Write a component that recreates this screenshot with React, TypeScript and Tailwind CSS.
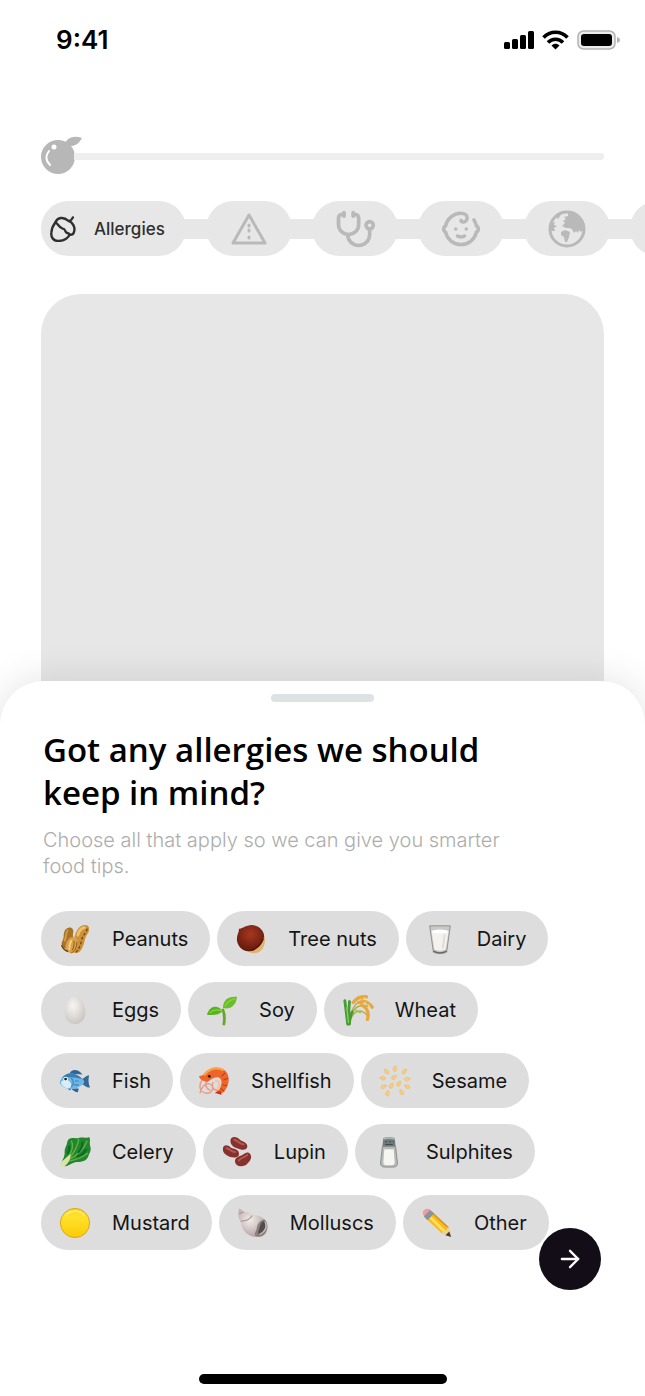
import { useState, type ReactNode } from "react";
import { ArrowRight, Baby } from "lucide-react";
import clsx from "clsx";

// ---------- Step icons ----------

function NutIcon() {
  return (
    <svg viewBox="0 0 76 76" className="size-[26px]" fill="none" stroke="currentColor" strokeWidth="7" strokeLinecap="round" strokeLinejoin="round" aria-hidden="true">
      <path d="M16 18C22 4 39 1 54 14C66 17 75 34 70 47C68 54 63 56 57 54C56 63 42 72 26 73C10 74 2 62 4 48C5 37 9 27 16 18Z" />
      <path d="M16 18C24 24 27 34 37 37C46 37 43 47 49 49C54 50 56 51 57 54" />
      <path d="M56 15C61 13 65 9 67 4" />
    </svg>
  );
}

function WarningIcon() {
  return (
    <svg viewBox="0 0 36 34" className="h-[34px] w-9" fill="none" stroke="currentColor" strokeWidth="3" strokeLinejoin="round" strokeLinecap="round" aria-hidden="true">
      <path d="M18 3 34 31H2Z" />
      <path d="M18 13v1M18 18v1M18 25v1" />
    </svg>
  );
}

function StethoscopeIcon() {
  return (
    <svg viewBox="0 0 24 24" className="size-11" fill="none" stroke="currentColor" strokeWidth="2" strokeLinecap="round" strokeLinejoin="round" aria-hidden="true">
      <path d="M6 4H5a2 2 0 0 0-2 2v3.500a5.500 5.500 0 0 0 11 0V6a2 2 0 0 0-2-2h-1" />
      <path d="M8 15a6 6 0 1 0 12 0v-3M11 3v2M6 3v2" />
      <circle cx="20" cy="10" r="2" />
    </svg>
  );
}

function GlobeIcon() {
  return (
    <svg viewBox="0 0 38 38" className="size-[38px]" aria-hidden="true">
      <circle cx="19" cy="19" r="17" fill="none" stroke="currentColor" strokeWidth="3" />
      <path fill="currentColor" d="M20 3c9 0 16 7 16 16l-3 3-2-2-1 3-2-2-2 2-2-4-3-1-3 0-4-2 3-3-2-2 3-2-2-2 4-1zM13 22l4-2 5 2-1 5-2 5-2 0-1-5-3-2zM3 13l4-1-1 3 3 1-3 2 1 3-4 0z" />
      <path d="M12 4c-1 2-1 3-3 4" stroke="currentColor" strokeWidth="2" fill="none" />
    </svg>
  );
}

const steps: { id: string; icon: ReactNode; label?: string }[] = [
  { id: "Allergies", icon: <NutIcon />, label: "Allergies" },
  { id: "Intolerances", icon: <WarningIcon /> },
  { id: "Health conditions", icon: <StethoscopeIcon /> },
  { id: "Life stage", icon: <Baby className="size-[42px]" strokeWidth={2} aria-hidden="true" /> },
  { id: "Region", icon: <GlobeIcon /> },
  { id: "More", icon: null },
];

// ---------- Allergen pictures, all on a 32x32 grid ----------

const peanuts = (
  <>
    <path d="M9 4c4-1 6 2 5 6-1 3 2 6 0 11-2 6-9 7-11 3-3-4 1-7 1-11S5 5 9 4z" fill="#a87327" />
    <path d="M8 7c-2 3-1 7-3 11" stroke="#cf9c4c" strokeWidth="2" fill="none" strokeLinecap="round" />
    <path d="M27 1c5 0 5 6 2 10-2 3-2 4-3 8-2 7-4 12-9 12-6 0-6-8-3-12 2-3 1-4 2-7 2-6 5-11 11-11z" fill="#cb9038" />
    <path d="M26 4c-4 1-6 4-7 8" stroke="#ecc06d" strokeWidth="3" fill="none" strokeLinecap="round" />
    <path d="M29 5c-1 5-5 7-6 12-1 6-3 10-6 13" stroke="#7a4813" strokeWidth="1.500" fill="none" strokeDasharray="3 2" />
    <path d="M13 14c5-1 7 3 6 8-1 6-3 9-7 9S6 28 6 24s3-9 7-10z" fill="#d9a24a" />
    <path d="M12 18c-2 3-2 6-2 9" stroke="#f3cf87" strokeWidth="2" fill="none" strokeLinecap="round" />
    <path d="M18 19c0 6-2 10-6 12M15 18c0 4 0 7-2 10" stroke="#8a561a" strokeWidth="1" fill="none" />
    <path d="M2 23c1 3 3 5 6 6" stroke="#6d3f10" strokeWidth="1.500" fill="none" strokeLinecap="round" />
  </>
);

const chestnut = (
  <>
    <path d="M29 11c4 6 1 16-5 19-5 2-10 1-13-2z" fill="#e0b26f" />
    <path d="M3 5c4 0 6-3 13-4 8 0 14 6 14 12-1 7-8 14-15 16C7 30 1 23 1 16 1 11 4 8 3 5z" fill="url(#nutSkin)" />
    <path d="M29 16c-3 7-8 11-13 12" stroke="#4e1109" strokeWidth="1.500" fill="none" />
  </>
);

const milk = (
  <>
    <path d="M5 2h22l-4 28c-3 2-11 2-14 0z" fill="#c9c9c7" stroke="#8f8f8d" />
    <path d="M7 8c5-2 13-2 18 0l-3 19c-3 2-9 2-12 0z" fill="#f3f2ee" />
    <ellipse cx="16" cy="8" rx="9" ry="2" fill="#fff" />
    <path d="M9 29c4 2 10 2 14 0" stroke="#666" strokeWidth="1.500" fill="none" />
    <path d="M21 11l-2 15" stroke="#dedbd4" strokeWidth="2" />
  </>
);

const egg = <path d="M16 1c6 0 11 10 11 18 0 7-5 12-11 12S5 26 5 19C5 11 10 1 16 1z" fill="url(#eggShell)" />;

const sprout = (
  <>
    <path d="M18 31c1-6 1-10-1-15" stroke="#69a62b" strokeWidth="3" fill="none" strokeLinecap="round" />
    <path d="M17 17C11 10 3 11 0 21c7 1 13 0 17-4z" fill="#55b51f" />
    <path d="M17 14C17 5 23 1 32 2c-1 9-7 14-15 12z" fill="#69bf2a" />
    <path d="M3 19c4-4 8-4 13-2M19 12c3-5 7-7 11-8" stroke="#8fd043" strokeWidth="1.300" fill="none" />
  </>
);

const wheat = (
  <>
    <path d="M5 31C8 19 11 7 26 2M6 30C8 16 15 9 27 12M7 29C10 18 18 12 27 23" stroke="#b8ad4b" strokeWidth="1.500" fill="none" />
    <path d="M11 8C15 3 20 1 25 2M17 8c6-2 11 0 14 5M20 11c6 2 8 9 6 15" stroke="#e7a73c" strokeWidth="3.500" strokeDasharray="4 1" fill="none" strokeLinecap="round" />
    <path d="M17 6c3-2 6-3 9-3M22 8c4 1 6 3 7 6" stroke="#f8cf73" strokeWidth="1.500" strokeDasharray="3 2" fill="none" />
    <path d="M2 6c1 8 2 16 3 25M7 7c-1 9-1 16-1 24M10 18c-2 4-3 8-3 13" stroke="#459c32" strokeWidth="3" fill="none" strokeLinecap="round" />
    <path d="M4 13c1 6 1 11 2 17M11 15l8 4" stroke="#8ac95a" strokeWidth="1.500" fill="none" />
  </>
);

const fish = (
  <>
    <path d="M10 8c3-5 9-5 14 1zM12 24c2 2 4 4 7 4l1-4zM7 22c1 2 2 3 4 4l1-4z" fill="#2e6598" />
    <path d="M22 15c4-2 6-5 9-5-1 4-1 9 1 13-4 0-7-3-10-5z" fill="#326995" />
    <path d="M0 16C5 7 16 5 25 15c1 1 1 3 0 4C17 27 5 26 0 19z" fill="#6fb5e5" />
    <path d="M2 13C7 6 16 6 24 14c-7-2-14-3-22-1z" fill="#3b7db2" />
    <path d="M1 18c0-4 10-5 11 2 0 3-2 4-4 4-3-1-6-3-7-6z" fill="#d7edf8" />
    <path d="M12 13c3 3 3 7 0 9M16 16h4M15 20h5" stroke="#3e83b5" strokeWidth="1.300" fill="none" />
    <circle cx="6" cy="14" r="2.500" fill="#fff" />
    <circle cx="6" cy="14" r="1.500" fill="#16232e" />
  </>
);

const shrimp = (
  <>
    <path d="M9 11C-2 16-1 28 8 29c8 0 8-9 3-10-5-1-8 3-10 10M10 14c-4 4-4 9 2 12M15 17c-2 5 0 9 5 9" stroke="#e79c87" strokeWidth="1.500" fill="none" />
    <path d="M4 10C9 2 21-1 28 5c7 7 3 21-5 25l-6-1c5-4 9-10 6-15-3-4-8-1-14 3-4-1-8-2-9-6z" fill="#ed6529" />
    <path d="M6 9C11 3 18 1 25 4" stroke="#ffa24d" strokeWidth="2.500" fill="none" strokeLinecap="round" />
    <path d="m24 11 4-4M26 15l5-2M25 20l5 1M23 24l4 3" stroke="#c43d19" strokeWidth="1.200" fill="none" />
    <path d="M17 16c5-1 6 4 3 9" stroke="#f5c4ad" strokeWidth="3" fill="none" />
    <path d="M17 28l7 3-1-4z" fill="#bf2f1a" />
    <circle cx="11" cy="11" r="1.500" fill="#31150f" />
  </>
);

const sesameSeeds = [
  [7, 6, -40], [16, 3, 10], [26, 6, 40], [3, 13, -80], [15, 12, 60], [29, 14, 85], [4, 22, 65],
  [12, 21, 30], [20, 19, 30], [29, 22, -65], [8, 29, 10], [23, 28, -30],
];

const sesame = sesameSeeds.map(([x, y, angle]) => (
  <path key={`${x}-${y}`} d="M0-3.500C2-1 3 2 0 3-3 2-2-1 0-3.500z" fill="#f8cc7b" stroke="#eab45c" strokeWidth=".5" transform={`translate(${x} ${y}) rotate(${angle})`} />
));

const leaf = (
  <>
    <path d="M10 2c3-2 6 0 10-1 4-1 7 1 11-1 2 3 0 5 1 9 2 6-1 8-2 12-3 6-8 5-14 6-4 1-8 5-12 4-4-1-2-5 0-9 2-5 0-7 2-11 2-3 1-7 4-9z" fill="#22862c" />
    <path d="M12 4c3 5 1 11-3 18M20 2c-1 9-5 15-12 23M29 4c-3 8-9 15-21 21M30 17c-6 5-13 7-21 9" stroke="#62b045" strokeWidth="1.500" fill="none" />
    <path d="M24 5c0 6-2 9-5 12M28 13c-3 5-7 7-10 8M10 9c0 4 0 6-2 9" stroke="#0d6824" strokeWidth="2" fill="none" />
    <path d="M11 18c1 5-3 12-8 14-3-1-3-3-1-6z" fill="#d8e3a5" />
  </>
);

const beans = (
  <>
    <path d="M9 4c0-5 7-5 10-1 3 2 8 3 8 7 0 5-7 4-11 2-4-1-7-4-7-8z" fill="#87322e" />
    <path d="M1 13c0-5 5-5 8-2 3 2 9 2 9 6 1 6-6 5-10 4-4-2-7-4-7-8z" fill="#87322e" />
    <path d="M14 27c-1-5 4-6 8-8 3-2 5-4 8-1 3 4-1 9-5 12-4 2-10 2-11-3z" fill="#87322e" />
    <path d="M13 3c4 1 5 4 10 5M5 12c4 1 5 4 9 4M18 25c2-3 6-3 9-6" stroke="#b35a54" strokeWidth="2" fill="none" strokeLinecap="round" />
  </>
);

const salt = (
  <>
    <path d="M9 10h14l2 18c0 3-2 4-5 4h-8c-3 0-5-1-5-4z" fill="#b8bab8" stroke="#858a88" />
    <path d="M11 13h10l1 14c0 2-1 3-3 3h-6c-2 0-3-1-3-3z" fill="#f5f5f2" />
    <path d="M10 1c4-1 8-1 12 0l1 9H9z" fill="#707a7a" />
    <path d="M10 2c4-1 8-1 12 0" stroke="#aab2b2" strokeWidth="2" />
    <path d="M12 5h2m2 0h2m2 0h1M12 8h8" stroke="#3d4747" />
  </>
);

const yellowDot = (
  <>
    <circle cx="16" cy="16" r="15.500" fill="url(#yellow)" stroke="#dda310" />
    <path d="M6 8C11 2 21 2 26 8" stroke="#ffed76" strokeWidth="1.500" fill="none" />
  </>
);

const shell = (
  <>
    <path d="M1 2c0-3 3 0 5 2 5 0 7 1 9 4 8-1 15 3 16 11 1 7-3 12-10 12C10 31 4 24 3 15 0 11 0 7 1 2z" fill="url(#shellBody)" />
    <path d="M1 6c3 0 4-1 5-2M3 14c6 0 10-2 12-6" stroke="#a69593" strokeWidth="1.200" fill="none" />
    <path d="M28 12c4 3 4 9 2 13-2 5-7 6-11 5-3-3 1-5 1-9 1-5 4-8 8-9z" fill="#8a8080" />
    <path d="M27 14c4 4 3 10-3 14-4 0-2-4-1-7s1-5 4-7z" fill="#544d4d" />
    <path d="M29 15c2 5 0 10-6 13" stroke="#c9bfbd" strokeWidth="1.500" fill="none" />
  </>
);

const pencil = (
  <>
    <path d="M10 4 28 20l3 10-10-3L4 11z" fill="#f5bb20" />
    <path d="m8 9 17 17" stroke="#ffdf57" strokeWidth="3" />
    <path d="m11 5 17 16" stroke="#d5911b" strokeWidth="1.500" />
    <path d="M2 8c-3-4 3-9 7-6l3 3-7 7z" fill="#ea929b" />
    <path d="m8 2 5 4-7 7-4-4z" fill="#89949a" />
    <path d="M1 6c-1-3 4-7 8-4L3 8z" fill="#ee9ba3" />
    <path d="m28 20 3 10-10-3 2-3 3 0 1-3z" fill="#efd09b" />
    <path d="m29 25 2 6-6-2z" fill="#3e3b38" />
  </>
);

const allergens: { name: string; picture: ReactNode }[] = [
  { name: "Peanuts", picture: peanuts },
  { name: "Tree nuts", picture: chestnut },
  { name: "Dairy", picture: milk },
  { name: "Eggs", picture: egg },
  { name: "Soy", picture: sprout },
  { name: "Wheat", picture: wheat },
  { name: "Fish", picture: fish },
  { name: "Shellfish", picture: shrimp },
  { name: "Sesame", picture: sesame },
  { name: "Celery", picture: leaf },
  { name: "Lupin", picture: beans },
  { name: "Sulphites", picture: salt },
  { name: "Mustard", picture: yellowDot },
  { name: "Molluscs", picture: shell },
  { name: "Other", picture: pencil },
];

// Gradients shared by the allergen pictures
function Gradients() {
  return (
    <svg className="absolute size-0" aria-hidden="true">
      <defs>
        <radialGradient id="nutSkin" cx=".5" cy=".35" r=".7">
          <stop stopColor="#a6381f" />
          <stop offset="1" stopColor="#5f160c" />
        </radialGradient>
        <radialGradient id="eggShell" cx=".4" cy=".35" r=".7">
          <stop stopColor="#f7f5f2" />
          <stop offset="1" stopColor="#c9c5c1" />
        </radialGradient>
        <radialGradient id="shellBody" cx=".4" cy=".4" r=".6">
          <stop stopColor="#f3ecea" />
          <stop offset="1" stopColor="#b5a5a3" />
        </radialGradient>
        <linearGradient id="yellow" x1="0" y1="0" x2="0" y2="1">
          <stop stopColor="#fdd426" />
          <stop offset=".3" stopColor="#ffe12b" />
          <stop offset="1" stopColor="#fbcb05" />
        </linearGradient>
      </defs>
    </svg>
  );
}

function StatusBar() {
  return (
    <div className="flex h-20 items-center justify-between pr-[25px] pl-14">
      <span className="text-[26px] leading-8 font-semibold text-black">9:41</span>
      <svg viewBox="0 0 116 20" className="h-5 w-[116px]" aria-hidden="true">
        <g fill="#000">
          <rect x="0" y="12" width="6" height="7" rx="1.500" />
          <rect x="8" y="9" width="6" height="10" rx="1.500" />
          <rect x="16" y="5" width="6" height="14" rx="1.500" />
          <rect x="24" y="1" width="6" height="18" rx="1.500" />
        </g>
        <g fill="none" stroke="#000" strokeWidth="3.500">
          <path d="M39.500 7.500C46 .5 57 .5 63.500 7.500" />
          <path d="M44 12.500C48 8 55 8 59 12.500" />
        </g>
        <path d="M51.500 19.500 47.500 15.500C50 13 53 13 55.500 15.500z" fill="#000" />
        <rect x="74" y="1" width="37" height="18" rx="5.500" fill="#ececec" stroke="#b3b3b3" strokeWidth="1.500" />
        <rect x="77" y="4" width="31" height="12" rx="3" fill="#000" />
        <path d="M113 7c4 1 4 5 0 6z" fill="#b3b3b3" />
      </svg>
    </div>
  );
}

function ProgressTrack() {
  return (
    <div role="progressbar" aria-label="Profile progress" aria-valuenow={0} className="flex h-[38px] items-center">
      <svg viewBox="0 0 41 38" className="h-[38px] w-[41px] shrink-0" aria-hidden="true">
        <circle cx="17" cy="21" r="17" fill="#b7b7b7" />
        <path d="M23 9C26 1 33-1 41 2 38 8 33 11 26 10z" fill="#b7b7b7" />
        <circle cx="13" cy="11" r="2.500" fill="#fff" />
        <path d="M8 15c-4 5-3 10 1 14" stroke="#fff" strokeWidth="2" fill="none" strokeLinecap="round" />
      </svg>
      <div className="-ml-2 mt-0.5 h-[7px] flex-1 rounded-r-full bg-[#eeeeee]" />
    </div>
  );
}

function Steps() {
  return (
    <nav aria-label="Steps" className="flex items-center overflow-hidden pl-[41px]">
      {steps.map((step, index) => (
        <div key={step.id} className="flex shrink-0 items-center">
          {index > 0 && <span className="-mx-1 h-5 w-7 bg-[#e7e7e7]" />}
          <button
            type="button"
            aria-label={step.id}
            aria-current={step.label ? "step" : undefined}
            className={clsx(
              "flex h-[55px] items-center rounded-full bg-[#e7e7e7]",
              step.label ? "w-[145px] gap-[18px] pl-[9px] text-[#2f2f2f]" : "w-[86px] justify-center text-[#b9b9b9]"
            )}
          >
            {step.icon}
            {step.label && <span className="text-[17px] leading-6 font-medium">{step.label}</span>}
          </button>
        </div>
      ))}
    </nav>
  );
}

function AllergenChip({ name, picture, selected, onToggle }: { name: string; picture: ReactNode; selected: boolean; onToggle: () => void }) {
  return (
    <button
      type="button"
      aria-pressed={selected}
      onClick={onToggle}
      className={clsx(
        "flex h-[55px] items-center gap-[21px] rounded-full pr-[22px] pl-[18px]",
        selected ? "bg-[#c4c4c4]" : "bg-[#dddddd]"
      )}
    >
      <svg viewBox="-1 -1 34 34" className="size-8 shrink-0" aria-hidden="true">
        {picture}
      </svg>
      <span className="text-xl leading-7 text-[#151515]">{name}</span>
    </button>
  );
}

export default function App() {
  const [selected, setSelected] = useState<string[]>([]);

  const toggle = (name: string) => {
    setSelected((prev) => (prev.includes(name) ? prev.filter((x) => x !== name) : [...prev, name]));
  };

  return (
    <main className="flex min-h-screen flex-col overflow-hidden bg-white font-['Inter',sans-serif]">
      <Gradients />
      <StatusBar />
      <div className="mt-14 px-[41px]">
        <ProgressTrack />
      </div>
      <div className="mt-[27px]">
        <Steps />
      </div>

      <div className="mx-[41px] mt-[38px] min-h-60 flex-1 rounded-t-[40px] bg-[#e7e7e7]" />

      {/* Bottom sheet */}
      <section className="relative -mt-11 rounded-t-[44px] bg-white px-[41px] pt-[13px] pb-3 shadow-[0_0_40px_rgba(0,0,0,0.12)]">
        <div className="mx-auto h-2 w-[103px] rounded-full bg-[#dfe2e5]" />
        <div className="mt-[26px] px-0.5">
          <h1 className="max-w-[500px] font-['Open_Sans',sans-serif] text-[33px] leading-[43px] font-semibold text-black">
            Got any allergies we should keep in mind?
          </h1>
          <p className="mt-[13px] max-w-[480px] text-xl leading-[26px] font-light text-[#adadad]">
            Choose all that apply so we can give you smarter food tips.
          </p>
        </div>

        <div className="mt-8 flex flex-wrap gap-x-[7px] gap-y-4">
          {allergens.map((item) => (
            <AllergenChip
              key={item.name}
              {...item}
              selected={selected.includes(item.name)}
              onToggle={() => toggle(item.name)}
            />
          ))}
        </div>

        <button
          type="button"
          aria-label="Next"
          className="absolute right-11 bottom-[106px] flex size-[62px] items-center justify-center rounded-full bg-[#120d17] text-white"
        >
          <ArrowRight className="size-7" strokeWidth={2} />
        </button>

        <div className="mx-auto mt-[124px] h-[10px] w-[248px] rounded-full bg-black" />
      </section>
    </main>
  );
}
